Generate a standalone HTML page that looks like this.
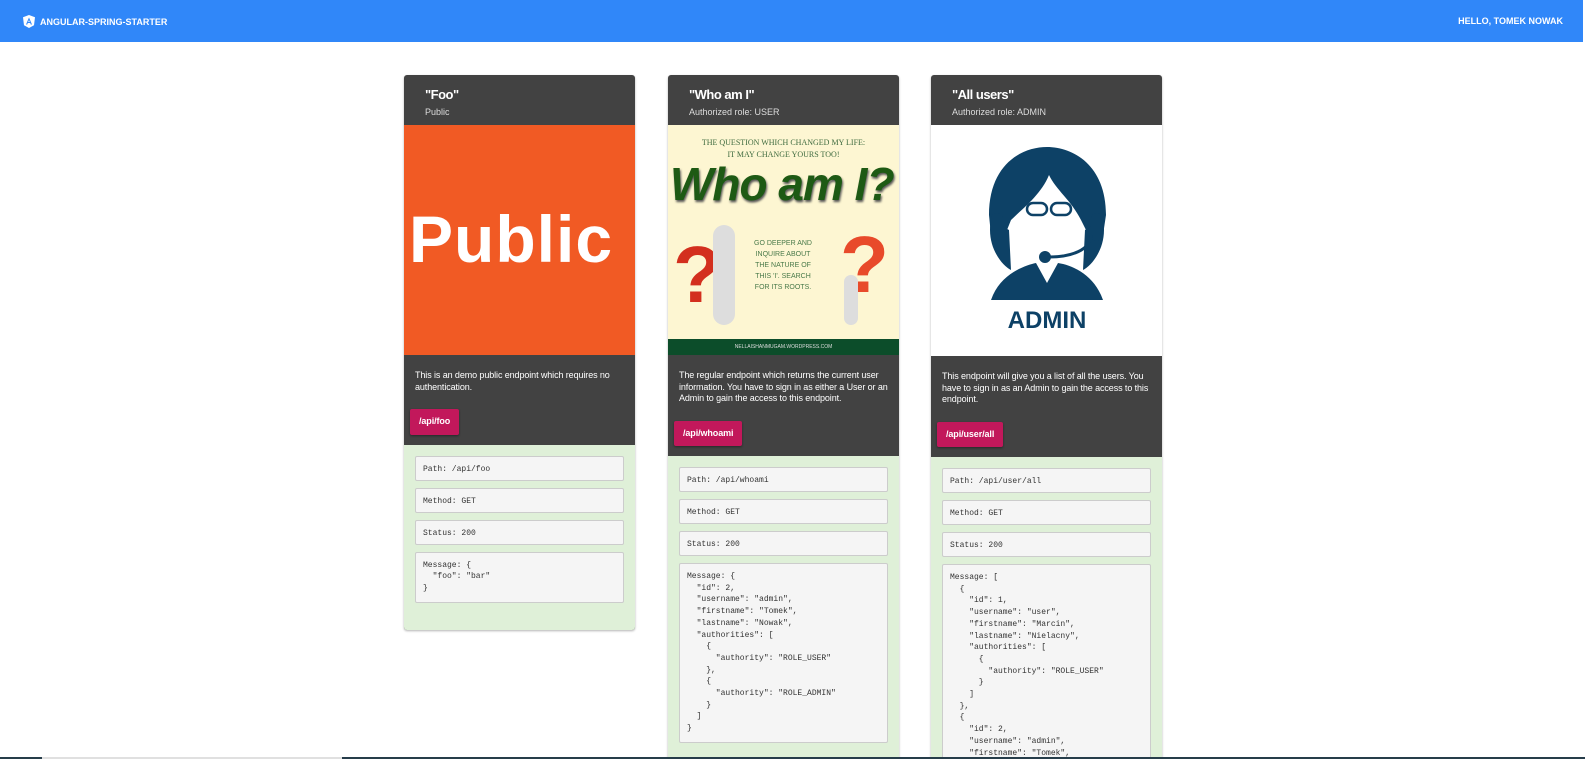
<!DOCTYPE html>
<html><head><meta charset="utf-8"><style>
*{box-sizing:border-box;margin:0;padding:0}
html,body{width:1585px;height:759px;overflow:hidden}
body{background:#fff;font-family:"Liberation Sans",sans-serif;position:relative}
.top{position:absolute;left:0;top:0;width:1583px;height:42px;background:#3087f9;color:#fff;font-weight:bold;font-size:9px}
.top .l{position:absolute;left:23px;top:15px;display:flex;align-items:center;gap:5px}
.top .r{position:absolute;right:20px;top:16px}
.card{position:absolute;top:75px;width:231px;background:#424242;border-radius:3px;overflow:hidden;box-shadow:0 1px 2px rgba(0,0,0,.3)}
.hd{height:50px;padding:12px 21px;color:#fff}
.hd b{font-size:13px;display:block;letter-spacing:-.5px}
.hd span{font-size:9px;color:#ddd}
.img{height:230px;position:relative;overflow:hidden}
.desc{color:#fff;font-size:9px;line-height:11.5px;padding:15px 11px 0 11px;letter-spacing:-.1px}
.btn{display:inline-block;background:#c2185b;color:#fff;font-weight:bold;font-size:9px;padding:7px 9px;border-radius:2px;margin:16px 0 0 -5px;box-shadow:0 1px 2px rgba(0,0,0,.4)}
.green{background:#dff0d8;padding:11px 11px 20px 11px;margin-top:10px}
.pre{background:#f5f5f5;border:1px solid #ccc;border-radius:2px;font-family:"Liberation Mono",monospace;font-size:8px;color:#333;padding:7px 7px;line-height:11.7px;white-space:pre;margin-bottom:7px}
.pre.s{height:25px}
</style></head><body>
<div class="top"><div class="l"><svg width="12" height="13" viewBox="0 0 12 13"><path d="M6 0L0 2.2l1 8L6 13l5-2.8 1-8z" fill="#fff"/><path d="M6 2.5L3 9.5h1.2l.6-1.5h2.4l.6 1.5H9zM5.2 7L6 5l.8 2z" fill="#3087f9"/></svg>ANGULAR-SPRING-STARTER</div><div class="r">HELLO, TOMEK NOWAK</div></div>

<div class="card" style="left:404px">
<div class="hd"><b>"Foo"</b><span>Public</span></div>
<div class="img" style="background:#f15a24"><div style="position:absolute;left:5px;top:76px;color:#fff;font-weight:bold;font-size:66px;letter-spacing:1px">Public</div></div>
<div class="desc">This is an demo public endpoint which requires no authentication.<br><span class="btn">/api/foo</span></div>
<div class="green">
<div class="pre s">Path: /api/foo</div><div class="pre s">Method: GET</div><div class="pre s">Status: 200</div><div class="pre">Message: {
  "foo": "bar"
}</div></div>
</div>

<div class="card" style="left:668px">
<div class="hd"><b>"Who am I"</b><span>Authorized role: USER</span></div>
<div class="img" style="background:#fdf6d2">
<div style="position:absolute;top:12px;width:100%;text-align:center;font-family:'Liberation Serif',serif;font-size:8px;color:#3f6b3f;line-height:12px">THE QUESTION WHICH CHANGED MY LIFE:<br>IT MAY CHANGE YOURS TOO!</div>
<div style="position:absolute;top:32px;left:2px;font-family:'Liberation Sans',sans-serif;font-weight:bold;font-style:italic;font-size:46px;color:#1e5a14;letter-spacing:-1px;text-shadow:1px 2px 2px #555">Who am I?</div>
<div style="position:absolute;top:113px;left:80px;width:70px;text-align:center;font-size:7px;color:#4a7a4a;line-height:11px">GO DEEPER AND INQUIRE ABOUT THE NATURE OF THIS 'I'. SEARCH FOR ITS ROOTS.</div>
<div style="position:absolute;left:5px;top:110px;font-size:80px;font-weight:bold;color:#d32f1e;line-height:1">?</div>
<div style="position:absolute;left:172px;top:100px;font-size:80px;font-weight:bold;color:#e84a2a;line-height:1">?</div>
<div style="position:absolute;left:45px;top:100px;width:22px;height:100px;background:#ddd;border-radius:11px"></div>
<div style="position:absolute;left:176px;top:150px;width:14px;height:50px;background:#ddd;border-radius:7px"></div>
<div style="position:absolute;bottom:0;width:100%;height:16px;background:#0c4d2a;color:#ddd;font-size:5px;text-align:center;line-height:16px">NELLAISHANMUGAM.WORDPRESS.COM</div>
</div>
<div class="desc">The regular endpoint which returns the current user information. You have to sign in as either a User or an Admin to gain the access to this endpoint.<br><span class="btn">/api/whoami</span></div>
<div class="green">
<div class="pre s">Path: /api/whoami</div><div class="pre s">Method: GET</div><div class="pre s">Status: 200</div><div class="pre">Message: {
  "id": 2,
  "username": "admin",
  "firstname": "Tomek",
  "lastname": "Nowak",
  "authorities": [
    {
      "authority": "ROLE_USER"
    },
    {
      "authority": "ROLE_ADMIN"
    }
  ]
}</div></div>
</div>

<div class="card" style="left:931px">
<div class="hd"><b>"All users"</b><span>Authorized role: ADMIN</span></div>
<div class="img" style="background:#fff;height:231px">
<svg width="231" height="231" viewBox="0 0 231 231" style="position:absolute;left:0;top:0">
<g fill="#0d4166">
<path d="M58 90C58 40 90 22 116 22S175 40 175 90L172 110 160 115 150 95C140 75 125 65 118 50 110 70 90 85 80 95L72 115 60 110z"/>
<path d="M60 95C55 120 70 140 80 145L78 105zM172 95C177 120 162 140 152 145L154 105z"/>
<path d="M62 170C72 148 95 140 105 138L116 158 127 138C140 140 160 148 170 170L172 175H60z"/>
<rect x="60" y="88" width="12" height="28" rx="5"/><rect x="160" y="88" width="12" height="28" rx="5"/>
<circle cx="114" cy="132" r="6"/>
<text x="116" y="203" text-anchor="middle" font-family="Liberation Sans" font-weight="bold" font-size="24">ADMIN</text>
</g>
<path d="M160 110C160 125 140 132 118 132" stroke="#0d4166" stroke-width="3" fill="none"/>
<g stroke="#0d4166" stroke-width="2.5" fill="#fff"><rect x="96" y="78" width="20" height="12" rx="6"/><rect x="120" y="78" width="20" height="12" rx="6"/></g>
</svg></div>
<div class="desc">This endpoint will give you a list of all the users. You have to sign in as an Admin to gain the access to this endpoint.<br><span class="btn">/api/user/all</span></div>
<div class="green">
<div class="pre s">Path: /api/user/all</div><div class="pre s">Method: GET</div><div class="pre s">Status: 200</div><div class="pre">Message: [
  {
    "id": 1,
    "username": "user",
    "firstname": "Marcin",
    "lastname": "Nielacny",
    "authorities": [
      {
        "authority": "ROLE_USER"
      }
    ]
  },
  {
    "id": 2,
    "username": "admin",
    "firstname": "Tomek",</div></div>
</div>

<div style="position:absolute;left:0;top:757px;width:1585px;height:2px;background:#263d4a"></div>
<div style="position:absolute;left:42px;top:757px;width:300px;height:2px;background:#e0e0e0"></div>
</body></html>
